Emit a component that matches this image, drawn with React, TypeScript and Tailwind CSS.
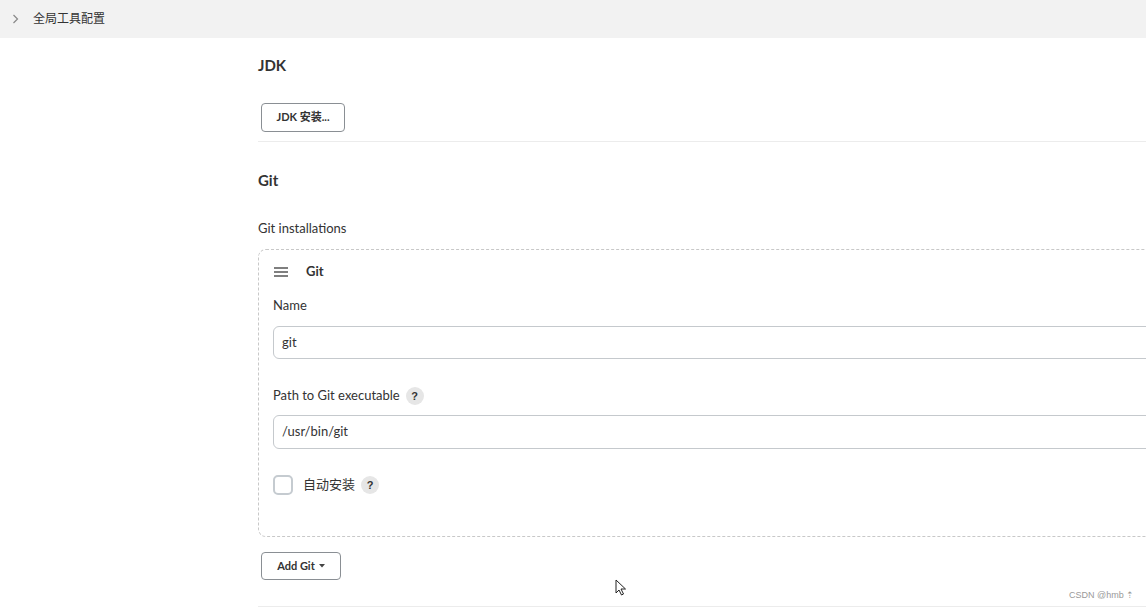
import React from 'react';

const font = { fontFamily: 'Lato, "Noto Sans CJK SC", sans-serif' };

const Help = () => (
  <span className="ml-[6px] inline-flex h-[18px] w-[18px] items-center justify-center rounded-full bg-[#e6e6e6] text-[11px] font-bold text-[#333]" style={{ fontFamily: '"Liberation Sans", sans-serif' }}>
    ?
  </span>
);

const App: React.FC = () => {
  return (
    <div className="relative h-[609px] w-[1146px] overflow-hidden bg-white text-[#333]" style={font}>
      {/* Breadcrumb bar */}
      <div className="flex h-[38px] items-center bg-[#f2f2f2] pl-[12px]">
        <svg width="7" height="10" viewBox="0 0 7 10" className="mr-[14px]">
          <path d="M1.5 1 L5.5 5 L1.5 9" fill="none" stroke="#888" strokeWidth="1.2" />
        </svg>
        <span className="text-[12px] text-[#333]">全局工具配置</span>
      </div>

      <div className="ml-[258px] w-[960px]">
        {/* JDK */}
        <div className="pt-[15px]">
          <h2 className="h-[24px] text-[15px] font-bold leading-[24px]">JDK</h2>
          <button className="ml-[3px] mt-[26px] flex h-[29px] w-[84px] items-center justify-center rounded-[4px] border border-[#8a8f94] text-[11px] font-bold text-[#333]">
            JDK 安装...
          </button>
          <div className="mt-[9px] h-px bg-[#ececec]" />
        </div>

        {/* Git */}
        <div className="pt-[26px]">
          <h2 className="h-[24px] text-[15px] font-bold leading-[24px]">Git</h2>
          <div className="mt-[26px] h-[20px] text-[13px] leading-[20px]">Git installations</div>

          <div className="mt-[11px] h-[288px] rounded-[8px] border border-dashed border-[#c8c8c8] px-[14px] pt-[12px]">
            <div className="flex h-[20px] items-center">
              <svg width="14" height="10" viewBox="0 0 14 10" className="ml-[1px]">
                <path d="M0 1 H14 M0 5 H14 M0 9 H14" stroke="#555" strokeWidth="1.4" />
              </svg>
              <span className="ml-[18px] text-[13px] font-bold">Git</span>
            </div>

            <div className="mt-[13px] h-[20px] text-[13px] leading-[20px]">Name</div>
            <div className="mt-[11px] flex h-[33px] items-center rounded-[6px] border border-[#c5c9cd] px-[8px] text-[13px]">
              git
            </div>

            <div className="mt-[27px] flex h-[20px] items-center text-[13px]">
              Path to Git executable
              <Help />
            </div>
            <div className="mt-[9px] flex h-[34px] items-center rounded-[6px] border border-[#c5c9cd] px-[8px] text-[13px]">
              /usr/bin/git
            </div>

            <div className="mt-[26px] flex h-[20px] items-center text-[13px]">
              <span className="h-[20px] w-[20px] rounded-[5px] border-2 border-[#c5cbd0]" />
              <span className="ml-[10px]">自动安装</span>
              <Help />
            </div>
          </div>

          <button className="ml-[3px] mt-[15px] flex h-[28px] w-[80px] items-center justify-center rounded-[4px] border border-[#8a8f94] text-[11px] font-bold text-[#333]">
            Add Git
            <svg width="6" height="4" viewBox="0 0 6 4" className="ml-[4px]">
              <path d="M0 0 H6 L3 3.5 Z" fill="#444" />
            </svg>
          </button>
          <div className="mt-[26px] h-px bg-[#ececec]" />
        </div>
      </div>

      {/* watermark */}
      <div className="absolute left-[1069px] top-[589px] text-[9px] text-[#999]" style={{ fontFamily: '"Liberation Sans", sans-serif' }}>
        CSDN @hmb ⇡
      </div>

      {/* mouse cursor */}
      <svg className="absolute left-[615px] top-[579px]" width="12" height="18" viewBox="0 0 12 18">
        <path d="M1 1 L1 14 L4 11 L6.5 16 L8.5 15 L6 10 L10.5 10 Z" fill="#fff" stroke="#222" strokeWidth="1" strokeLinejoin="round" />
      </svg>
    </div>
  );
};

export default App;
